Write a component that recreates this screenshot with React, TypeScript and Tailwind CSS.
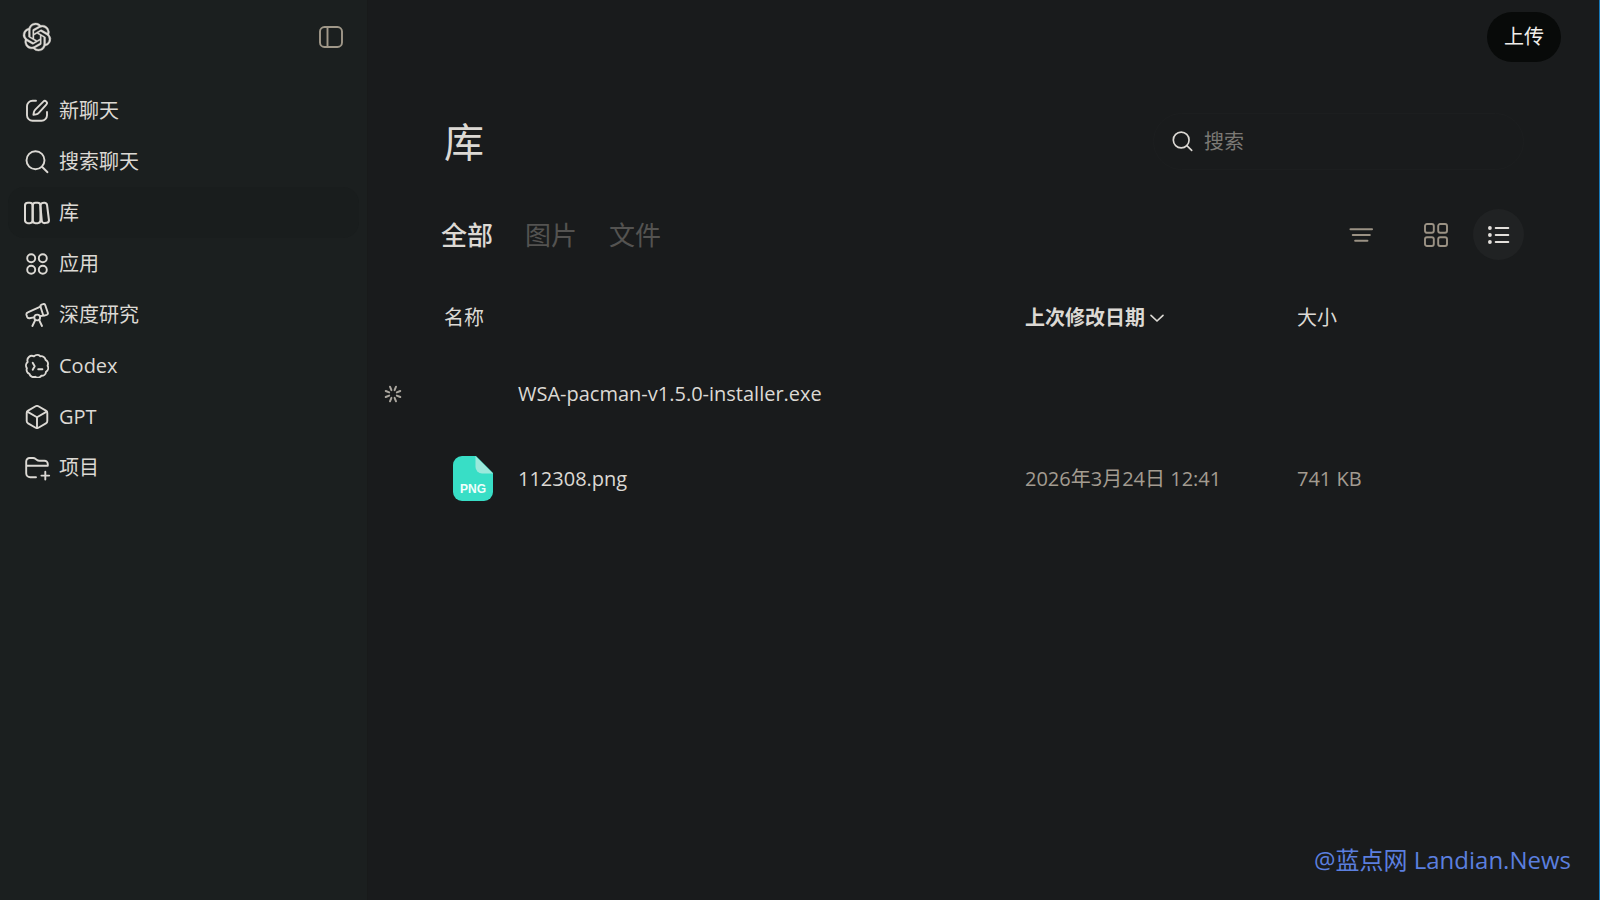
import React, { useState } from 'react';

type IconProps = { className?: string };

const Icon: React.FC<IconProps & { children: React.ReactNode }> = ({ className = 'size-6', children }) => (
  <svg
    viewBox="0 0 24 24"
    fill="none"
    stroke="currentColor"
    strokeWidth="1.9"
    strokeLinecap="round"
    strokeLinejoin="round"
    aria-hidden="true"
    className={`shrink-0 ${className}`}
  >
    {children}
  </svg>
);

const LogoIcon = () => (
  <svg viewBox="0 0 24 24" fill="currentColor" stroke="currentColor" strokeWidth=".3" aria-hidden="true" className="size-7 overflow-visible">
    <path d="M22.2819 9.8211a5.9847 5.9847 0 0 0-.5157-4.9108 6.0462 6.0462 0 0 0-6.5098-2.9A6.0651 6.0651 0 0 0 4.9807 4.1818a5.9847 5.9847 0 0 0-3.9977 2.9 6.0462 6.0462 0 0 0 .7427 7.0966 5.98 5.98 0 0 0 .511 4.9107 6.051 6.051 0 0 0 6.5146 2.9001A5.9847 5.9847 0 0 0 13.2599 24a6.0557 6.0557 0 0 0 5.7718-4.2058 5.9894 5.9894 0 0 0 3.9977-2.9001 6.0557 6.0557 0 0 0-.7475-7.0729zm-9.022 12.6081a4.4755 4.4755 0 0 1-2.8764-1.0408l.1419-.0804 4.7783-2.7582a.7948.7948 0 0 0 .3927-.6813v-6.7369l2.02 1.1686a.071.071 0 0 1 .038.052v5.5826a4.504 4.504 0 0 1-4.4945 4.4944zm-9.6607-4.1254a4.4708 4.4708 0 0 1-.5346-3.0137l.142.0852 4.783 2.7582a.7712.7712 0 0 0 .7806 0l5.8428-3.3685v2.3324a.0804.0804 0 0 1-.0332.0615L9.74 19.9502a4.4992 4.4992 0 0 1-6.1408-1.6464zM2.3408 7.8956a4.485 4.485 0 0 1 2.3655-1.9728V11.6a.7664.7664 0 0 0 .3879.6765l5.8144 3.3543-2.0201 1.1685a.0757.0757 0 0 1-.071 0l-4.8303-2.7865A4.504 4.504 0 0 1 2.3408 7.872zm16.5963 3.8558L13.1038 8.364 15.1192 7.2a.0757.0757 0 0 1 .071 0l4.8303 2.7913a4.4944 4.4944 0 0 1-.6765 8.1042v-5.6772a.79.79 0 0 0-.407-.667zm2.0107-3.0231l-.142-.0852-4.7735-2.7818a.7759.7759 0 0 0-.7854 0L9.409 9.2297V6.8974a.0662.0662 0 0 1 .0284-.0615l4.8303-2.7866a4.4992 4.4992 0 0 1 6.6802 4.66zM8.3065 12.863l-2.02-1.1638a.0804.0804 0 0 1-.038-.0567V6.0742a4.4992 4.4992 0 0 1 7.3757-3.4537l-.142.0805L8.704 5.459a.7948.7948 0 0 0-.3927.6813zm1.0976-2.3654l2.602-1.4998 2.6069 1.4998v2.9994l-2.5974 1.4997-2.6067-1.4997Z" />
  </svg>
);

const SidebarIcon = () => (
  <Icon>
    <rect x="1" y="2" width="22" height="20" rx="4.5" />
    <path d="M8.500 2v20" />
  </Icon>
);

const ComposeIcon = () => (
  <Icon>
    <path d="M11 1.800H7.500a5.500 5.500 0 0 0-5.500 5.500v9a5.500 5.500 0 0 0 5.500 5.500h9a5.500 5.500 0 0 0 5.500-5.500V13" />
    <path d="M18.300 2.600a2.100 2.100 0 0 1 3 3l-7.500 8.300a5 5 0 0 1-2.700 1.500l-2.700.5.500-2.700a5 5 0 0 1 1.400-2.600z" />
  </Icon>
);

const SearchIcon: React.FC<IconProps> = ({ className }) => (
  <Icon className={className}>
    <circle cx="10.500" cy="10.300" r="9" />
    <path d="m17 16.800 5.500 5.400" />
  </Icon>
);

const LibraryIcon = () => (
  <Icon className="-mx-px size-[26px]">
    <rect x=".9" y="2.600" width="7.100" height="18.800" rx="2.600" />
    <rect x="8" y="2.600" width="7.200" height="18.800" rx="2.600" />
    <path d="m15.200 6.200 1.200 12.900a2.400 2.400 0 0 0 2.700 2.200l1.900-.3a2.400 2.400 0 0 0 2-2.700L21.300 4.700a2.400 2.400 0 0 0-2.700-2.100l-1.500.2a2.300 2.300 0 0 0-1.900 2.200" />
  </Icon>
);

const AppsIcon = () => (
  <Icon>
    <circle cx="6.200" cy="6.200" r="4" />
    <circle cx="17.800" cy="6.200" r="4" />
    <circle cx="6.200" cy="17.800" r="4" />
    <circle cx="17.800" cy="17.800" r="4" />
  </Icon>
);

const TelescopeIcon = () => (
  <Icon>
    <path d="m15.500 3.600-12.700 5.800a2.200 2.200 0 0 0-1.300 2.600l.6 1.800a2.200 2.200 0 0 0 2.400 1.400l4.300-.8" />
    <path d="m15.600 13 2.800-.4" />
    <path d="M15.500 3.800c-.3-1 .2-1.900 1.100-2.200l1.600-.5c.9-.3 1.800.2 2.100 1.100l2.500 7.600c.3.900-.2 1.800-1.100 2.100l-1.700.5c-.9.300-1.800-.2-2.100-1.100z" />
    <circle cx="12.200" cy="14.500" r="2.900" />
    <path d="m10.300 17-2.900 6M14.100 17l2.900 6" />
  </Icon>
);

const CodexIcon = () => (
  <Icon>
    <path d="M9 2.400a4.500 4.500 0 0 1 6.300-.2 4.500 4.500 0 0 1 5.300 3.700 4.500 4.500 0 0 1 2 5.800 4.500 4.500 0 0 1-1.600 6.100 4.500 4.500 0 0 1-4.800 4 4.500 4.500 0 0 1-6.100 1 4.500 4.500 0 0 1-5.700-2.900 4.500 4.500 0 0 1-2.500-5.700A4.500 4.500 0 0 1 2.700 8 4.500 4.500 0 0 1 9 2.400z" />
    <path d="m7.700 8.700 2 3.500-2 3.500M13.200 15.300h4.200" />
  </Icon>
);

const CubeIcon = () => (
  <Icon>
    <path d="M10.600 1.300a2.800 2.800 0 0 1 2.800 0l7.500 4.300a2.800 2.800 0 0 1 1.400 2.400v8a2.800 2.800 0 0 1-1.400 2.400l-7.500 4.300a2.800 2.800 0 0 1-2.800 0l-7.500-4.300A2.800 2.800 0 0 1 1.700 16V8a2.800 2.800 0 0 1 1.400-2.400z" />
    <path d="m2.300 6.600 9.700 5.600 9.700-5.600M12 12.200V23" />
  </Icon>
);

const FolderPlusIcon = () => (
  <Icon className="size-6 overflow-visible">
    <path d="M22.800 9.600V8a3.300 3.300 0 0 0-3.300-3.300h-5.200c-1 0-1.900-.4-2.700-1L10.400 2.800a3.500 3.500 0 0 0-2.300-.8H4.600a3.400 3.400 0 0 0-3.400 3.400v11.800a4 4 0 0 0 4 4H11M1.200 9.800h21.600M20.300 15.700v7.800M16.400 19.600h7.800" />
  </Icon>
);

const FilterIcon = () => (
  <Icon>
    <path d="M1.500 6.200h21.500M3.800 12h17M6.200 17.800h12.200" strokeWidth="2.100" />
  </Icon>
);

const GridIcon = () => (
  <Icon>
    <rect x="1" y="1" width="8.800" height="8.800" rx="2" />
    <rect x="14.200" y="1" width="8.800" height="8.800" rx="2" />
    <rect x="1" y="14.200" width="8.800" height="8.800" rx="2" />
    <rect x="14.200" y="14.200" width="8.800" height="8.800" rx="2" />
  </Icon>
);

const ListIcon = () => (
  <Icon>
    <path d="M8.700 5h12.600M8.700 12h12.600M8.700 19h12.600" strokeWidth="2" />
    <g fill="currentColor" stroke="none">
      <circle cx="2.900" cy="5" r="1.900" />
      <circle cx="2.900" cy="12" r="1.900" />
      <circle cx="2.900" cy="19" r="1.900" />
    </g>
  </Icon>
);

const ChevronDownIcon = () => (
  <Icon className="size-4">
    <path d="m3 8 9 8.500L21 8" strokeWidth="2.500" />
  </Icon>
);

const SpinnerIcon = () => (
  <Icon className="size-[18px]">
    {[22.5, 67.5, 112.5, 157.5, 202.5, 247.5, 292.5, 337.5].map((angle) => (
      <path key={angle} d="M12 1.500v5" strokeWidth="2.600" transform={`rotate(${angle} 12 12)`} />
    ))}
  </Icon>
);

const PngIcon = () => (
  <svg viewBox="0 0 40 45" aria-hidden="true" className="h-[45px] w-10">
    <path d="M9 0h14l17 17v19a9 9 0 0 1-9 9H9a9 9 0 0 1-9-9V9a9 9 0 0 1 9-9z" fill="#38dec6" />
    <path d="M22.500 0 40 17.500H29a6.500 6.500 0 0 1-6.500-6.500z" fill="#9be9dc" />
    <text x="20" y="36.500" textAnchor="middle" fontSize="12" fontWeight="700" fill="#f0fffc" className="font-['Liberation_Sans',sans-serif]">
      PNG
    </text>
  </svg>
);

const NAV_ITEMS = [
  { label: '新聊天', icon: ComposeIcon },
  { label: '搜索聊天', icon: SearchIcon },
  { label: '库', icon: LibraryIcon, active: true },
  { label: '应用', icon: AppsIcon },
  { label: '深度研究', icon: TelescopeIcon },
  { label: 'Codex', icon: CodexIcon },
  { label: 'GPT', icon: CubeIcon },
  { label: '项目', icon: FolderPlusIcon },
];

const TABS = ['全部', '图片', '文件'];

const FILES = [
  { name: 'WSA-pacman-v1.5.0-installer.exe', modified: '', size: '', uploading: true },
  { name: '112308.png', modified: '2026年3月24日 12:41', size: '741 KB', uploading: false },
];

const Sidebar = () => (
  <aside className="w-[368px] shrink-0 border-r border-[#181a1a] bg-[#1b1f1f]">
    <div className="flex h-[74px] items-center justify-between pr-6 pl-[23px]">
      <a href="#" aria-label="ChatGPT">
        <LogoIcon />
      </a>
      <button aria-label="关闭边栏" className="text-[#a09889]">
        <SidebarIcon />
      </button>
    </div>
    <nav className="mt-[11px] px-2">
      {NAV_ITEMS.map(({ label, icon: ItemIcon, active }) => (
        <a
          key={label}
          href="#"
          aria-current={active ? 'page' : undefined}
          className={`flex h-[51px] items-center gap-[10px] rounded-2xl px-[17px] ${active ? 'bg-[#191d1d]' : ''}`}
        >
          <ItemIcon />
          <span>{label}</span>
        </a>
      ))}
    </nav>
  </aside>
);

const FileTable = () => (
  <table className="mt-6 w-full table-fixed text-left">
    <thead>
      <tr className="h-[67px]">
        <td className="w-16" />
        <th scope="col" className="font-normal">名称</th>
        <th scope="col" aria-sort="descending" className="w-[272px]">
          <button className="flex items-center gap-1 font-bold">
            上次修改日期
            <ChevronDownIcon />
          </button>
        </th>
        <th scope="col" className="w-[227px] font-normal">大小</th>
      </tr>
    </thead>
    <tbody>
      {FILES.map((file) => (
        <tr key={file.name} className="h-[85px]">
          <td className="pl-1 text-[#aba79f]">{file.uploading && <SpinnerIcon />}</td>
          <td>
            <div className="flex items-center gap-[25px] pl-[9px]">
              <div className="w-10">{!file.uploading && <PngIcon />}</div>
              <span>{file.name}</span>
            </div>
          </td>
          <td className="text-[#a39c91]">{file.modified}</td>
          <td className="text-[#a39c91]">{file.size}</td>
        </tr>
      ))}
    </tbody>
  </table>
);

export default function App() {
  const [tab, setTab] = useState(TABS[0]);
  const [query, setQuery] = useState('');

  return (
    <div className="relative flex min-h-screen border-r border-[#1678b8] bg-[#191b1c] font-['Open_Sans','Noto_Sans_CJK_SC',sans-serif] text-[20px] leading-7 text-[#dcd9d4]">
      <Sidebar />

      <main className="min-w-0 flex-1">
        <header className="flex h-[74px] items-center justify-end pr-[38px]">
          <button className="h-[50px] rounded-full bg-[#080a09] px-[17px] text-[#f0eeeb]">上传</button>
        </header>

        <div className="pt-[39px] pr-[75px] pl-3">
          <div className="flex h-[57px] items-center justify-between pl-16">
            <h1 className="text-[40px] leading-[57px]">库</h1>
            <label className="flex h-[57px] w-[371px] items-center gap-[11px] rounded-full border border-[#1c1e1f] px-[18px]">
              <SearchIcon className="size-[21px]" />
              <input
                type="text"
                aria-label="搜索"
                placeholder="搜索"
                value={query}
                onChange={(e) => setQuery(e.target.value)}
                className="min-w-0 flex-1 bg-transparent outline-none placeholder:text-[#7b7975]"
              />
            </label>
          </div>

          <div className="mt-[39px] flex items-center justify-between pl-[61px]">
            <div role="tablist" className="flex gap-8 text-[26px]">
              {TABS.map((name) => (
                <button
                  key={name}
                  role="tab"
                  aria-selected={name === tab}
                  onClick={() => setTab(name)}
                  className={name === tab ? 'font-medium' : 'text-[#545351]'}
                >
                  {name}
                </button>
              ))}
            </div>
            <div className="flex text-[#9b9284]">
              <button aria-label="筛选" className="mr-6 grid size-[51px] place-items-center rounded-full">
                <FilterIcon />
              </button>
              <button aria-label="网格视图" className="mr-3 grid size-[51px] place-items-center rounded-full">
                <GridIcon />
              </button>
              <button aria-label="列表视图" aria-pressed="true" className="grid size-[51px] place-items-center rounded-full bg-[#202223] text-[#e3e0dc]">
                <ListIcon />
              </button>
            </div>
          </div>

          <FileTable />
        </div>
      </main>

      <div className="absolute right-7 bottom-[22px] text-[24px] leading-9 text-[#5b7fdf]">@蓝点网 Landian.News</div>
    </div>
  );
}
